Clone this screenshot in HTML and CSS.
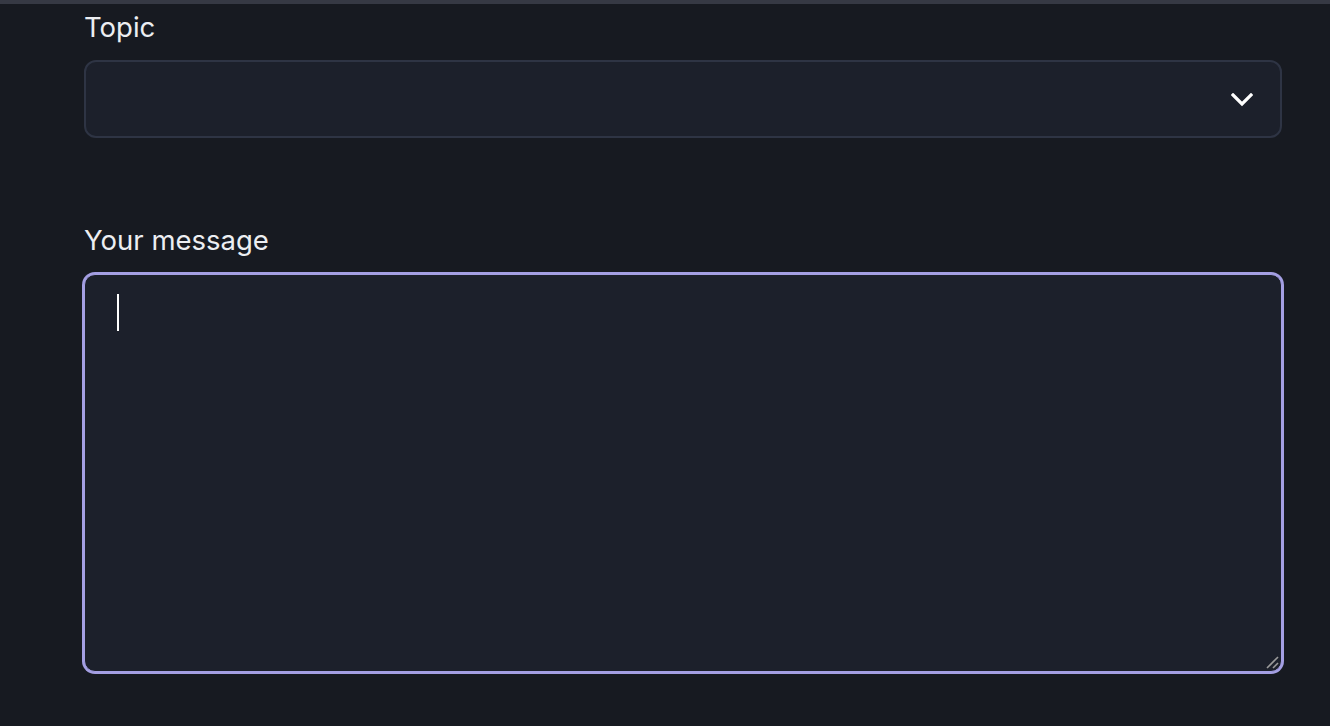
FILE: index.html
```html
<!DOCTYPE html>
<html>
<head>
<meta charset="utf-8">
<link rel="stylesheet" href="styles.css">
</head>
<body>
<div class="topbar"></div>
<form class="form">
  <div class="field">
    <label class="label">Topic</label>
    <div class="select">
      <svg class="chevron" width="22" height="14" viewBox="0 0 22 14"><polyline points="2,2 11,11 20,2" fill="none" stroke="#ffffff" stroke-width="3.2" stroke-linecap="square"/></svg>
    </div>
  </div>
  <div class="field field-msg">
    <label class="label">Your message</label>
    <div class="textarea">
      <span class="caret"></span>
      <svg class="grip" width="14" height="14" viewBox="0 0 14 14"><line x1="2" y1="13" x2="13" y2="2" stroke="#9a9a9a" stroke-width="1.6"/><line x1="8" y1="13" x2="13" y2="8" stroke="#9a9a9a" stroke-width="1.6"/></svg>
    </div>
  </div>
</form>
</body>
</html>
```
FILE: styles.css
```css
html, body {
  margin: 0;
  padding: 0;
  background: #171a21;
  font-family: Inter, "Noto Sans", sans-serif;
  height: 100%;
  overflow: hidden;
}
.topbar {
  height: 4px;
  background: #363944;
}
.form {
  width: 1198px;
  margin-left: 84px;
  padding-top: 7px;
  display: flex;
  flex-direction: column;
}
.field {
  display: flex;
  flex-direction: column;
}
.field-msg {
  margin-top: 86px;
}
.label {
  color: #eceef2;
  font-size: 27.5px;
  line-height: 32px;
  margin-bottom: 17px;
}
.field-msg .label {
  margin-bottom: 18px;
}
.select {
  height: 74px;
  border: 2px solid #2e3444;
  border-radius: 12px;
  background: #1c202b;
  display: flex;
  align-items: center;
  justify-content: flex-end;
  padding-right: 27px;
}
.chevron {
  display: block;
  margin-top: 2px;
}
.textarea {
  position: relative;
  height: 358px;
  border: 1px solid #a49fe3;
  box-shadow: 0 0 0 2px #a49fe3;
  border-radius: 11px;
  background: #1c202b;
  padding: 19px 32px;
  box-sizing: content-box;
}
.caret {
  display: block;
  width: 2px;
  height: 37px;
  background: #ffffff;
}
.grip {
  position: absolute;
  right: 2px;
  bottom: 2px;
}
```
